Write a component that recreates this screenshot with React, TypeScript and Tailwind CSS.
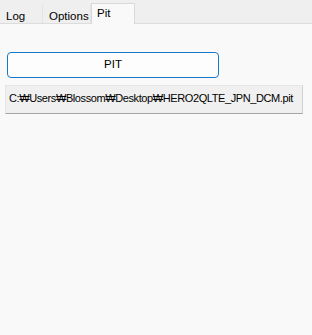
const font = { fontFamily: '"Liberation Sans", "DejaVu Sans", "Noto Sans CJK KR", sans-serif' };

function Tab({ label, active, w }: { label: string; active?: boolean; w: string }) {
  if (active) {
    return (
      <div
        className={`${w} h-[21px] mt-[3px] -mb-px border border-b-0 border-[#d9d9d9] bg-[#f9f9f9] pl-[5px] pt-[1px] text-[11.5px] leading-[16px] text-black`}
      >
        {label}
      </div>
    );
  }
  return (
    <div
      className={`${w} h-[18px] mt-[5px] border-r border-[#e3e3e3] pl-[6px] pt-[3px] text-[11.5px] leading-[16px] text-black`}
    >
      {label}
    </div>
  );
}

export default function App() {
  return (
    <div className="w-[312px] h-[335px] bg-[#f9f9f9] flex flex-col" style={font}>
      <div className="flex h-[24px] bg-[#efefef] border-b border-[#dcdcdc]">
        <Tab label="Log" w="w-[43px]" />
        <Tab label="Options" w="w-[48px]" />
        <Tab label="Pit" active w="w-[44px]" />
      </div>
      <div className="pl-[5px] pt-[28px] flex flex-col">
        <button className="ml-[2px] w-[212px] h-[26px] rounded-[4px] border border-[#1778c9] bg-[#fdfdfd] text-[11.5px] text-black">
          PIT
        </button>
        <div className="mt-[7px] w-[298px] h-[29px] bg-[#f0f0f0] border border-[#e6e6e6] border-b-[#a5a5a5] border-r-[#d0d0d0] pl-[3px] pt-[4px] text-[11px] leading-[16px] text-black whitespace-nowrap tracking-[-0.4px]">
          C:₩Users₩Blossom₩Desktop₩HERO2QLTE_JPN_DCM.pit
        </div>
      </div>
    </div>
  );
}
